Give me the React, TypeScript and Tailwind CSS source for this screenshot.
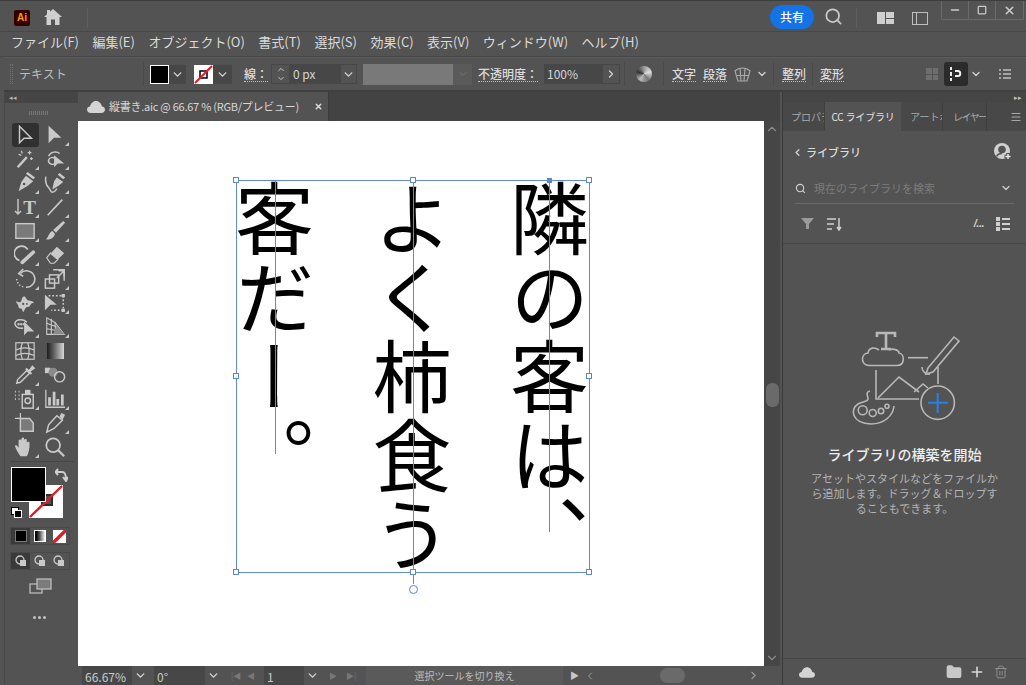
import React from "react";
import { ChevronDown, ChevronLeft, ChevronRight, ChevronUp, Search, X, Minus, Square, Plus, Trash2, Folder, Menu } from "lucide-react";

const CJK = { fontFamily: '"Noto Sans CJK JP", "Noto Sans", sans-serif' };

// line drawings for the tool panel, 24 box
const S = (p: React.SVGProps<SVGSVGElement> & { children: React.ReactNode }) => (
  <svg width="22" height="22" viewBox="0 0 24 24" fill="none" stroke="#c9c9c9" strokeWidth="1.6" {...p} />
);

const CloudIcon = ({ w, h }: { w: number; h: number }) => (
  <svg width={w} height={h} viewBox="0 0 18 12" fill="#d4d4d4"><path d="M4 12C1 12 0 10 0 8.5C0 6.5 1.5 5.5 3 5.5C3.5 2.5 6 0 9 0C12 0 14.5 2.5 15 5.5C16.5 5.5 18 6.5 18 8.5C18 10 17 12 14 12Z" /></svg>
);

const TOOLS: { icon: React.ReactNode; fly?: boolean; active?: boolean }[] = [
  { active: true, icon: <S><path d="M6 2.5V20.5L11 15.5H19Z" /></S> },
  { fly: true, icon: <S fill="#c9c9c9" stroke="none"><path d="M5 2V21L11 15H19Z" /></S> },
  { fly: true, icon: <S><path d="M4 21L14 10" strokeWidth="2.6" /><path d="M8 3l1 3M5 7l3 1M17 3v4M15 5h4M19 10v3M17.5 11.5h3" strokeWidth="1.3" /></S> },
  { fly: true, icon: <S><path d="M12 11c-2-1-6-1-7 2c-1 4 4 6 7 4" /><path d="M5 9c2-5 9-6 12-3" /><path d="M11 8V21L15 17H22Z" fill="#c9c9c9" stroke="none" /></S> },
  { fly: true, icon: <S fill="#c9c9c9" stroke="none"><path d="M13 4L21 10L15 15L5 21L8 11Z" /><path d="M13 2L15 0L23 6L21 8Z" /><circle cx="11" cy="13" r="1.4" fill="#535353" /></S> },
  { fly: true, icon: <S><path d="M14 6L21 11L16 15L9 19L11 10Z" fill="#c9c9c9" stroke="none" /><path d="M15 3L17 1L23 6L21 8Z" fill="#c9c9c9" stroke="none" /><path d="M2 5c-1 6 0 9 3 12c2 2 2 5 4 5c2 0 4-2 5-4" /></S> },
  { fly: true, icon: <div className="flex items-center text-[#c9c9c9]"><svg width="8" height="18" viewBox="0 0 8 18" fill="none" stroke="#c9c9c9" strokeWidth="1.4"><path d="M4 1V16M1 13l3 3l3-3" /></svg><span className="text-[19px] font-bold leading-none ml-[1px]" style={{ fontFamily: '"Liberation Serif", serif' }}>T</span></div> },
  { fly: true, icon: <S><path d="M4 21L20 4" strokeWidth="1.8" /></S> },
  { fly: true, icon: <S fill="#7a7a7a" strokeWidth="1.5"><rect x="2" y="4" width="20" height="16" /></S> },
  { fly: true, icon: <S fill="#c9c9c9" stroke="none"><path d="M21 1L23 3L13 14L10 11Z" /><path d="M9 12L12 15C11 20 6 22 2 21C5 19 5 14 9 12Z" /></S> },
  { fly: true, icon: <S><path d="M15 6A8 8 0 1 0 6 18" strokeWidth="1.8" /><path d="M9 20L21 9" strokeWidth="4" strokeLinecap="round" stroke="#c9c9c9" /></S> },
  { fly: true, icon: <S><path d="M3 15L14 3L22 10L11 21H7Z" fill="#c9c9c9" stroke="none" /><path d="M3 15L7 10L15 17L11 21H7Z" fill="#535353" stroke="#c9c9c9" strokeWidth="1.3" /></S> },
  { fly: true, icon: <S><path d="M7 6A9 9 0 1 1 13 21" strokeWidth="1.7" /><path d="M3 12c0 3 2 8 9 9" strokeDasharray="1.5 2" /><path d="M10 1L5 6L10 9" /></S> },
  { fly: true, icon: <S><rect x="1.5" y="12" width="10" height="10" /><rect x="6" y="7.5" width="10" height="9" /><path d="M10 2H22V14" /><path d="M14 11L22 3M16 3h6v6" /></S> },
  { fly: true, icon: <S fill="#c9c9c9" stroke="none"><path d="M2 10c2 0 3 2 5 1c2-1 1-6 4-6c2 0 2 3 4 4c3 1 5 0 7 3c-2 0-3 0-4 2c-1 3-3 2-5 3l-3 5c-1-2-1-3-2-4c-2 0-3 0-3-2c0-2-2-3-3-6Z" /><circle cx="10" cy="13" r="1.2" fill="#535353" /><circle cx="14" cy="13" r="1" fill="#535353" /></S> },
  { fly: true, icon: <S><path d="M1 3V20L7 14H14Z" fill="#c9c9c9" stroke="none" /><path d="M5 4H21V20H8" strokeDasharray="2 2" /><path d="M20 3h2v2h-2ZM20 19h2v2h-2Z" /></S> },
  { fly: true, icon: <S><path d="M14 7c-3-4-12-4-13 1c0 4 4 6 9 5" /><circle cx="5" cy="9" r=".6" /><circle cx="8" cy="9" r=".6" /><circle cx="11" cy="9" r=".6" /><path d="M11 6V21L15 17H22Z" fill="#c9c9c9" stroke="none" /></S> },
  { fly: true, icon: <S strokeWidth="1.2"><path d="M3 2V20H22L12 7Z" /><path d="M3 8L17 13M3 14L20 17M8 3V20M12 7L13 20" /><path d="M10 20L22 20L14 10Z" fill="#8a8a8a" stroke="none" /></S> },
  { icon: <S strokeWidth="1.3"><rect x="2" y="3" width="20" height="18" /><path d="M2 11c6-3 14-3 20 0M2 17c6-3 14-3 20 0M9 3c-2 6-2 12 0 18M15 3c2 6 2 12 0 18" /></S> },
  { icon: <div className="w-[17px] h-[16px] bg-gradient-to-r from-[#1e1e1e] to-[#d8d8d8]" /> },
  { fly: true, icon: <S><path d="M3 21L4 17L14 7L17 10L7 20Z" /><path d="M13 5L19 11" strokeWidth="2.4" /><path d="M16 8L20 2.5L22 4.5L17 8" fill="#c9c9c9" /></S> },
  { icon: <S><rect x="1" y="4" width="6" height="6" fill="#c9c9c9" stroke="none" /><circle cx="10" cy="9" r="5" fill="#8a8a8a" stroke="none" /><circle cx="17" cy="14" r="5.5" /></S> },
  { fly: true, icon: <S strokeWidth="1.6"><rect x="9" y="7" width="12" height="15" /><rect x="12" y="2" width="6" height="5" fill="#c9c9c9" stroke="none" /><circle cx="15" cy="14" r="3" /><path d="M1 4h1M5 4h1M1 8h1M5 8h1M1 12h1M5 12h1" strokeWidth="2" /></S> },
  { fly: true, icon: <S strokeWidth="2.2"><path d="M2 2V21H23" strokeWidth="1.4" /><path d="M6 19V10M11 19V4M15 19V12M20 19V7" strokeWidth="3" /></S> },
  { icon: <S strokeWidth="1.6"><path d="M1 7H7M7 1V7" strokeWidth="1.3" /><path d="M7 7H17L21 12V21H7Z" fill="#7a7a7a" /></S> },
  { fly: true, icon: <S><path d="M3 22L5 14L14 4L20 9L11 18Z" /><path d="M17 5L19 1L23 3L20 9" fill="#c9c9c9" stroke="none" /></S> },
  { fly: true, icon: <S fill="#c9c9c9" stroke="none"><path d="M7 22C4 18 2 14 1 11c1-2 3 0 4 2V5c1-2 3-1 3 0v6V3c1-2 3-2 3 0v8V4c1-1 3-1 3 1v7V7c1-1 3-1 3 1c0 6-1 11-3 14Z" /></S> },
  { icon: <S strokeWidth="1.9"><circle cx="10" cy="10" r="7.5" /><path d="M15.5 15.5L22 22" strokeWidth="2.4" /></S> },
];

function Chev({ className = "" }: { className?: string }) {
  return <ChevronDown size={13} strokeWidth={2.6} className={`text-[#d4d4d4] ${className}`} />;
}

// dotted underline label in the control bar
function Ul({ children, className = "" }: { children: React.ReactNode; className?: string }) {
  return <span className={`text-[12px] leading-[15px] font-medium text-[#dcdcdc] border-b border-dotted border-[#bdbdbd] ${className}`}>{children}</span>;
}

function Handle({ x, y }: { x: number; y: number }) {
  return <div className="absolute w-[6px] h-[6px] bg-white border border-[#5b85d6]" style={{ left: x - 3, top: y - 3 }} />;
}

function SelLine({ x, y, w, h }: { x: number; y: number; w: number; h: number }) {
  return <div className="absolute bg-[#6489d4]" style={{ left: x, top: y, width: w, height: h }} />;
}

function Canvas() {
  // offsets are page coords minus the canvas origin (78,121)
  const ox = 78;
  const oy = 121;
  const L = 236 - ox;
  const R = 589 - ox;
  const T = 180 - oy;
  const B = 572 - oy;
  const M = (L + R) / 2 + 0.5;
  const MY = (T + B) / 2;
  return (
    <div className="relative flex-1 bg-white overflow-hidden">
      <div
        className="absolute text-black text-[79px] leading-[137.5px] whitespace-pre"
        style={{ ...CJK, writingMode: "vertical-rl", left: 206 - ox, top: 179 - oy, width: 412, height: 420 }}
      >
        {"隣の客は、\nよく柿食う\n客だー。"}
      </div>
      <SelLine x={L} y={T} w={R - L} h={1} />
      <SelLine x={L} y={B} w={R - L} h={1} />
      <SelLine x={L} y={T} w={1} h={B - T} />
      <SelLine x={R} y={T} w={1} h={B - T} />
      <SelLine x={275 - ox} y={T} w={1} h={274} />
      <SelLine x={M} y={T} w={1} h={B - T + 12} />
      <SelLine x={549 - ox} y={T} w={1} h={352} />
      <Handle x={L} y={T} />
      <Handle x={R} y={T} />
      <Handle x={L} y={B} />
      <Handle x={R} y={B} />
      <Handle x={L} y={MY} />
      <Handle x={R} y={MY} />
      <Handle x={M} y={T} />
      <Handle x={M} y={B} />
      <div className="absolute w-[5px] h-[5px] bg-[#5b85d6]" style={{ left: 547 - ox, top: T - 2 }} />
      <div className="absolute w-[9px] h-[9px] rounded-full bg-white border border-[#5b85d6]" style={{ left: 409 - ox, top: 585 - oy }} />
    </div>
  );
}

function TitleBar() {
  return (
    <div className="flex items-start h-[32px] border-b border-[#474747] border-t border-t-[#3c3c3c]">
      <div className="ml-[14px] mt-[9px] w-[16px] h-[16px] rounded-[2px] bg-[#330000] text-[#ff9a00] text-[10px] font-bold leading-[16px] text-center" style={{ fontFamily: '"Liberation Sans", sans-serif' }}>Ai</div>
      <svg className="ml-[14px] mt-[8px]" width="18" height="16" viewBox="0 0 18 16" fill="#cfcfcf">
        <path d="M9 0L18 8H15.5V16H11V10.5H7V16H2.5V8H0L3 5.3V1H6V2.7Z" />
      </svg>
      <div className="ml-[25px] mt-[7px] w-px h-[20px] bg-[#5e5e5e]" />
      <div className="flex-1" />
      <div className="mt-[4px] w-[44px] h-[24px] rounded-full bg-[#1473e6] text-white text-[12px] leading-[24px] text-center font-medium" style={CJK}>共有</div>
      <Search size={19} strokeWidth={2.2} className="ml-[10px] mt-[6px] text-[#c9c9c9]" />
      <div className="ml-[13px] mt-[7px] w-px h-[20px] bg-[#5e5e5e]" />
      <div className="ml-[20px] mt-[11px] w-[17px] h-[12px] grid grid-cols-2 grid-rows-2 gap-[1px]">
        <div className="row-span-2 bg-[#cfcfcf]" />
        <div className="bg-[#cfcfcf]" />
        <div className="bg-[#cfcfcf]" />
      </div>
      <div className="ml-[18px] mt-[11px] w-[16px] h-[13px] border border-[#bdbdbd] flex">
        <div className="w-[4px] border-r border-[#bdbdbd]" />
      </div>
      <div className="ml-[13px] flex h-[19px] border border-t-0 border-[#6a6a6a] rounded-b-[2px]">
        <div className="w-[27px] flex items-center justify-center border-r border-[#6a6a6a]"><Minus size={12} strokeWidth={3} className="text-[#c9c9c9]" /></div>
        <div className="w-[27px] flex items-center justify-center border-r border-[#6a6a6a]"><Square size={10} strokeWidth={3} className="text-[#c9c9c9]" /></div>
        <div className="w-[27px] flex items-center justify-center"><X size={13} strokeWidth={3} className="text-[#c9c9c9]" /></div>
      </div>
      <div className="w-[2px]" />
    </div>
  );
}

function MenuBar() {
  const items = ["ファイル(F)", "編集(E)", "オブジェクト(O)", "書式(T)", "選択(S)", "効果(C)", "表示(V)", "ウィンドウ(W)", "ヘルプ(H)"];
  return (
    <div className="flex items-center h-[25px] pl-[11px] pb-[5px] gap-[13.5px] text-[13px] text-[#dadada] border-b border-[#474747]" style={CJK}>
      {items.map(m => <span key={m} className="whitespace-nowrap">{m}</span>)}
    </div>
  );
}

function ControlBar() {
  return (
    <div className="flex items-center h-[35px] ml-[4px] pl-[6px] text-[#d4d4d4] border-t border-[#5c5c5c] border-b-2 border-b-[#3f3f3f]" style={CJK}>
      <div className="w-[3px] h-[20px] border-x border-dotted border-[#707070]" />
      <span className="ml-[6px] w-[48px] text-[12px] text-[#bdbdbd]">テキスト</span>
      <div className="ml-[76px] w-px h-[24px] bg-[#4a4a4a]" />
      <div className="ml-[6px] w-[19px] h-[19px] bg-black border border-white" />
      <div className="w-[17px] h-[19px] flex items-center justify-center bg-[#474747]"><Chev /></div>
      <svg className="ml-[8px]" width="19" height="19" viewBox="0 0 19 19">
        <rect width="19" height="19" fill="#fff" />
        <rect x="6" y="6" width="7" height="7" fill="none" stroke="#000" strokeWidth="1.5" />
        <path d="M1 18L18 1" stroke="#e01b24" strokeWidth="2" />
      </svg>
      <div className="w-[19px] h-[19px] flex items-center justify-center bg-[#474747]"><Chev /></div>
      <Ul className="ml-[12px]">線：</Ul>
      <div className="ml-[3px] w-[19px] h-[20px] flex flex-col items-center justify-center border border-[#474747]">
        <ChevronUp size={10} strokeWidth={2.4} />
        <ChevronDown size={10} strokeWidth={2.4} />
      </div>
      <div className="w-[50px] h-[20px] bg-[#474747] text-[12px] leading-[20px] pl-[3px]">0 px</div>
      <div className="w-[17px] h-[20px] flex items-center justify-center border border-[#474747]"><Chev /></div>
      <div className="ml-[6px] w-[90px] h-[21px] bg-[#797979]" />
      <div className="w-[19px] h-[21px] flex items-center justify-center bg-[#5a5a5a]"><ChevronDown size={12} strokeWidth={2} className="text-[#747474]" /></div>
      <Ul className="ml-[6px]">不透明度：</Ul>
      <div className="ml-[6px] w-[58px] h-[20px] bg-[#474747] text-[12px] leading-[20px] pl-[3px]">100%</div>
      <div className="w-[18px] h-[20px] flex items-center justify-center border border-[#474747]"><ChevronRight size={12} strokeWidth={2.6} /></div>
      <div className="ml-[4px] w-px h-[24px] bg-[#4a4a4a]" />
      <div className="ml-[11px] w-[16px] h-[16px] rounded-full bg-[conic-gradient(#999,#ddd,#777,#bbb,#333,#999)]" />
      <div className="ml-[11px] w-px h-[24px] bg-[#4a4a4a]" />
      <Ul className="ml-[8px]">文字</Ul>
      <Ul className="ml-[7px]">段落</Ul>
      <svg className="ml-[7px]" width="17" height="17" viewBox="0 0 17 17" fill="none" stroke="#a8a8a8" strokeWidth="1.2">
        <path d="M1 5C5 1 12 1 16 5L13 15H4ZM6 2.5L7 15M11 2.5L10 15M2.5 9.5H14.5" />
      </svg>
      <ChevronDown size={12} strokeWidth={2.6} className="ml-[5px]" />
      <div className="ml-[5px] w-px h-[24px] bg-[#4a4a4a]" />
      <Ul className="ml-[8px]">整列</Ul>
      <div className="ml-[6px] w-px h-[24px] bg-[#4a4a4a]" />
      <Ul className="ml-[7px]">変形</Ul>
      <div className="flex-1" />
      <div className="w-[12px] h-[12px] grid grid-cols-2 gap-[1px]">
        <div className="bg-[#6e6e6e]" /><div className="bg-[#6e6e6e]" /><div className="bg-[#6e6e6e]" /><div className="bg-[#6e6e6e]" />
      </div>
      <div className="ml-[6px] w-[24px] h-[24px] rounded-[3px] bg-[#2b2b2b] flex items-center justify-center">
        <svg width="14" height="14" viewBox="0 0 14 14" fill="none" stroke="#eee" strokeWidth="2"><path d="M2 0V3M2 5V9M2 11V14" /><path d="M6 4H9C12 4 12 9 9 9H6" /></svg>
      </div>
      <ChevronDown size={12} strokeWidth={2.6} className="ml-[2px]" />
      <svg className="ml-[17px] mr-[15px]" width="12" height="10" viewBox="0 0 12 10" stroke="#c0c0c0" strokeWidth="1.4">
        <path d="M0 1H2M0 5H2M0 9H2M4 1H12M4 5H12M4 9H12" />
      </svg>
    </div>
  );
}

function ToolPanel() {
  return (
    <div className="w-[74px] flex-none flex flex-col border-l border-[#474747] ml-[4px]">
      <div className="h-[11px] flex items-center bg-[#454545] rounded-t-[2px] pl-[4px] text-[#b4b4b4] text-[7px] leading-none">◂◂</div>
      <div className="h-[20px] flex items-center justify-center mr-[6px]"><div className="w-[19px] h-[4px] bg-[repeating-linear-gradient(90deg,#777_0,#777_1px,transparent_1px,transparent_2px)]" /></div>
      <div className="grid grid-cols-[30px_30px] auto-rows-[24px] pl-[5px]">
        {TOOLS.map((t, i) => (
          <div key={i} className={`relative flex items-center justify-center ${t.active ? "bg-[#303030] rounded-[3px] mx-[1.5px]" : ""}`}>
            {t.icon}
            {t.fly && <div className="absolute right-[1px] bottom-[1px] w-0 h-0 border-l-[4px] border-l-transparent border-b-[4px] border-b-[#c4c4c4]" />}
          </div>
        ))}
      </div>
      <div className="ml-[5px] mr-[4px] mt-[2px] h-px bg-[#474747]" />
      {/* fill and stroke */}
      <div className="relative h-[60px] mt-[5px]">
        <div className="absolute left-[24px] top-[18px] w-[34px] h-[33px] bg-white">
          <div className="absolute left-[12px] top-[9px] w-[12px] h-[12px] bg-[#535353] border-2 border-[#2d2d2d]" />
          <svg className="absolute inset-0" width="34" height="33"><path d="M1 32L33 1" stroke="#e01b24" strokeWidth="2.4" /></svg>
        </div>
        <div className="absolute left-[6px] top-0 w-[35px] h-[35px] bg-black border border-white" />
        <svg className="absolute left-[50px] top-[1px]" width="13" height="14" viewBox="0 0 13 14" fill="none" stroke="#cfcfcf" strokeWidth="2"><path d="M1 4H7C10 4 11 6 11 12M3 1L0.5 4L3 7M8 9L11 13L13 9" /></svg>
        <div className="absolute left-[6px] top-[40px] w-[8px] h-[8px] bg-white border border-black" />
        <div className="absolute left-[9px] top-[43px] w-[8px] h-[8px] bg-black border border-white" />
      </div>
      <div className="flex ml-[5px] w-[60px] h-[18px] border border-[#4a4a4a]">
        <div className="w-[20px] bg-[#3a3a3a] flex items-center justify-center"><div className="w-[12px] h-[12px] bg-black border border-[#777]" /></div>
        <div className="w-[20px] flex items-center justify-center"><div className="w-[12px] h-[12px] bg-gradient-to-r from-black to-white border border-white" /></div>
        <div className="w-[20px] flex items-center justify-center">
          <svg width="13" height="13"><rect width="13" height="13" fill="#fff" /><path d="M0 13L13 0" stroke="#e01b24" strokeWidth="3.4" /></svg>
        </div>
      </div>
      <div className="flex ml-[5px] w-[60px] h-[18px] mt-[7px] border border-[#4a4a4a]">
        {[true, false, false].map((on, i) => (
          <div key={i} className={`w-[20px] flex items-center justify-center ${on ? "bg-[#3a3a3a]" : ""}`}>
            <svg width="12" height="12" viewBox="0 0 12 12"><circle cx="5" cy="5" r="4" fill="none" stroke="#c9c9c9" strokeWidth="1.3" /><rect x="5" y="5" width="6" height="6" fill="#c9c9c9" /></svg>
          </div>
        ))}
      </div>
      <svg className="ml-[24px] mt-[8px]" width="23" height="16" viewBox="0 0 23 16" fill="none" stroke="#c4c4c4" strokeWidth="1.2">
        <rect x="1" y="6" width="12" height="9" /><rect x="8" y="1" width="14" height="10" fill="#7b7b7b" />
      </svg>
      <div className="flex gap-[2px] ml-[28px] mt-[22px]">
        <div className="w-[3px] h-[3px] rounded-full bg-[#c4c4c4]" /><div className="w-[3px] h-[3px] rounded-full bg-[#c4c4c4]" /><div className="w-[3px] h-[3px] rounded-full bg-[#c4c4c4]" />
      </div>
    </div>
  );
}

function StatusBar() {
  return (
    <div className="h-[19px] flex items-center bg-[#535353] text-[12px] text-[#c9c9c9] flex-none" style={CJK}>
      <div className="ml-[4px] w-[50px] h-[19px] bg-[#474747] leading-[20px] pl-[3px] pt-[1px]">66.67%</div>
      <div className="w-[17px] flex justify-center"><Chev /></div>
      <div className="ml-[5px] w-[51px] h-[19px] bg-[#474747] leading-[20px] pl-[3px] pt-[1px]">0°</div>
      <div className="w-[17px] flex justify-center"><Chev /></div>
      <span className="ml-[9px] w-[16px] text-[8px] text-[#777]">|◀</span>
      <span className="w-[17px] text-[8px] text-[#777]">◀</span>
      <div className="w-[40px] h-[19px] bg-[#474747] leading-[20px] pl-[3px] pt-[1px]">1</div>
      <div className="w-[17px] flex justify-center"><Chev /></div>
      <span className="w-[17px] ml-[8px] text-[8px] text-[#777]">▶</span>
      <span className="w-[20px] text-[8px] text-[#777]">▶|</span>
      <div className="w-[197px] h-[19px] bg-[#5a5a5a] text-center text-[10px] leading-[19px] text-[#bdbdbd]">選択ツールを切り換え</div>
      <span className="ml-[7px] w-[14px] text-[9px]">▶</span>
      <ChevronLeft size={12} strokeWidth={2} className="text-[#9a9a9a]" />
      <div className="ml-[64px] w-[25px] h-[15px] rounded-[7px] bg-[#6a6a6a]" />
      <div className="flex-1" />
      <ChevronRight size={13} strokeWidth={2} className="text-[#9a9a9a] mr-[20px]" />
    </div>
  );
}

function DocArea() {
  return (
    <div className="flex-1 flex flex-col min-w-0 bg-[#434343] mr-[2px]">
      <div className="h-[29px] flex items-end flex-none">
        <div className="w-[251px] h-[29px] bg-[#535353] flex items-center pl-[9px] text-[#d8d8d8] border-r border-[#3b3b3b]" style={CJK}>
          <CloudIcon w={18} h={12} />
          <span className="ml-[4px] text-[11px] tracking-[-0.25px] whitespace-nowrap">縦書き.aic @ 66.67 % (RGB/プレビュー)</span>
          <X size={9} strokeWidth={4} className="ml-auto mr-[5px] text-[#d8d8d8]" />
        </div>
      </div>
      <div className="flex-1 flex min-h-0">
        <div className="flex-1 flex flex-col min-w-0">
          <Canvas />
        </div>
        <div className="w-[16px] flex flex-col items-center bg-[#464646]">
          <ChevronUp size={14} strokeWidth={2} className="text-[#8a8a8a] mt-[1px]" />
          <div className="mt-[247px] w-[13px] h-[24px] rounded-[6px] bg-[#6a6a6a]" />
          <div className="flex-1" />
          <ChevronDown size={14} strokeWidth={2} className="text-[#8a8a8a] mb-[1px]" />
        </div>
      </div>
      <StatusBar />
    </div>
  );
}

function LibraryArt() {
  return (
    <svg className="ml-[68px] mt-[83px]" width="115" height="100" viewBox="60 15 115 100" fill="none" stroke="#b8b8b8" strokeWidth="1.6">
      <path d="M86 25V21H104V25M95 21V37M90 37H100" strokeWidth="2.6" />
      <path d="M78 53.5C70 53.5 69 42 77 41C78 35 84 35 88 38M98 38C102 36 108 38 108 41C114 42 114 53.5 106 53.5H78" />
      <path d="M117 45.7H137" />
      <path d="M137 56L163 25L168 29L142 60L135 62Z" />
      <path d="M131 55A7 7 0 0 0 139 62" />
      <path d="M147 55V72M85 58V87H128" />
      <path d="M87 86L108 65L128 80M123 80L132 72L137 76" />
      <circle cx="146.7" cy="90.7" r="16.7" />
      <path d="M146.7 81V101M137 90.7H157" stroke="#2680eb" strokeWidth="2" />
      <path d="M79 79c-5 1-2 5-2 8c0 3-5 2-10 5c-8 5-7 19 13 20c13 0 22-8 23-18" />
      <circle cx="71.7" cy="98.3" r="4.5" />
      <circle cx="81.7" cy="101" r="3.5" />
      <circle cx="90" cy="99" r="2.7" />
      <circle cx="96" cy="94.3" r="2" />
    </svg>
  );
}

function RightPanel() {
  return (
    <div className="w-[244px] flex-none flex flex-col border-l border-[#3a3a3a] bg-[#535353] text-[#d0d0d0]" style={CJK}>
      <div className="h-[10px] bg-[#454545] flex items-center justify-end pr-[4px] text-[7px] leading-none text-[#c0c0c0] flex-none">▸▸</div>
      <div className="h-[29px] bg-[#484848] flex items-stretch text-[10px] text-[#a9a9a9] flex-none">
        <div className="w-[42px] pl-[8px] leading-[29px] overflow-hidden whitespace-nowrap border-r border-[#3e3e3e]">プロパティ</div>
        <div className="w-[76px] bg-[#535353] text-[#e2e2e2] text-[10px] tracking-[-0.2px] leading-[29px] text-center whitespace-nowrap">CC ライブラリ</div>
        <div className="w-[42px] pl-[9px] leading-[29px] overflow-hidden whitespace-nowrap border-r border-[#3e3e3e]">アートボード</div>
        <div className="w-[44px] pl-[10px] leading-[29px] tracking-[-1.5px] overflow-hidden whitespace-nowrap border-r border-[#3e3e3e]">レイヤー</div>
        <div className="flex-1 flex items-center justify-end pr-[4px]"><Menu size={12} strokeWidth={1.6} className="text-[#c0c0c0]" /></div>
      </div>
      <div className="h-[42px] flex items-center pl-[9px] pr-[14px] flex-none">
        <ChevronLeft size={11} strokeWidth={3} />
        <span className="ml-[3px] text-[11px] font-medium text-[#dcdcdc]">ライブラリ</span>
        <svg className="ml-auto" width="18" height="18" viewBox="0 0 18 18">
          <circle cx="8" cy="8" r="8" fill="#d0d0d0" />
          <circle cx="8" cy="6.5" r="3.8" fill="#535353" />
          <path d="M2.5 13.5C3.5 11 6 10.5 8 10.5" fill="none" stroke="#535353" strokeWidth="1.4" />
          <path d="M14 10V17M10.5 13.5H17.5" stroke="#535353" strokeWidth="3.5" />
          <path d="M14 11V16M11.5 13.5H16.5" stroke="#e8e8e8" strokeWidth="1.4" />
        </svg>
      </div>
      <div className="h-[31px] mx-[12px] flex items-center border-b border-[#6a6a6a] flex-none">
        <Search size={11} strokeWidth={2.4} />
        <span className="ml-[8px] text-[11px] text-[#7c7c7c]">現在のライブラリを検索</span>
        <ChevronDown size={12} strokeWidth={2.6} className="ml-auto mr-[2px]" />
      </div>
      <div className="h-[40px] flex items-center pl-[18px] pr-[16px] border-b border-[#474747] flex-none">
        <svg width="13" height="13" viewBox="0 0 13 13"><path d="M0 1H13L8 7V12H5V7Z" fill="#9a9a9a" /></svg>
        <svg className="ml-[13px]" width="15" height="14" viewBox="0 0 15 14" fill="none" stroke="#cfcfcf" strokeWidth="1.5"><path d="M0 2H9M0 7H7M0 12H5M12 1V13M10 10L12 13L14 10" /></svg>
        <span className="ml-auto text-[11px] leading-none font-bold italic tracking-[-0.5px]" style={{ fontFamily: '"Liberation Sans", sans-serif' }}>/...</span>
        <svg className="ml-[12px]" width="14" height="14" viewBox="0 0 14 14" fill="#cfcfcf"><path d="M0 0H4V4H0ZM0 5H4V9H0ZM0 10H4V14H0ZM6 1H14V3H6ZM6 6H14V8H6ZM6 11H14V13H6Z" /></svg>
      </div>
      <LibraryArt />
      <div className="mt-[17px] text-center text-[14px] leading-[20px] text-[#ececec] font-medium">ライブラリの構築を開始</div>
      <div className="mt-[7px] px-[26px] text-center text-[11px] leading-[15px] text-[#b4b4b4]">
        アセットやスタイルなどをファイルから追加します。ドラッグ＆ドロップすることもできます。
      </div>
      <div className="flex-1" />
      <div className="h-[27px] flex items-center pl-[16px] pr-[18px] border-t border-[#474747] flex-none">
        <CloudIcon w={16} h={11} />
        <Folder size={16} fill="#c9c9c9" stroke="#c9c9c9" className="ml-auto" />
        <Plus size={16} strokeWidth={2.4} className="ml-[7px] text-[#d8d8d8]" />
        <Trash2 size={14} strokeWidth={1.4} className="ml-[9px] text-[#9a9a9a]" />
      </div>
    </div>
  );
}

export default function App() {
  return (
    <div className="w-[1026px] h-[685px] flex flex-col bg-[#535353] overflow-hidden">
      <TitleBar />
      <MenuBar />
      <ControlBar />
      <div className="flex-1 flex min-h-0">
        <ToolPanel />
        <DocArea />
        <RightPanel />
      </div>
    </div>
  );
}
